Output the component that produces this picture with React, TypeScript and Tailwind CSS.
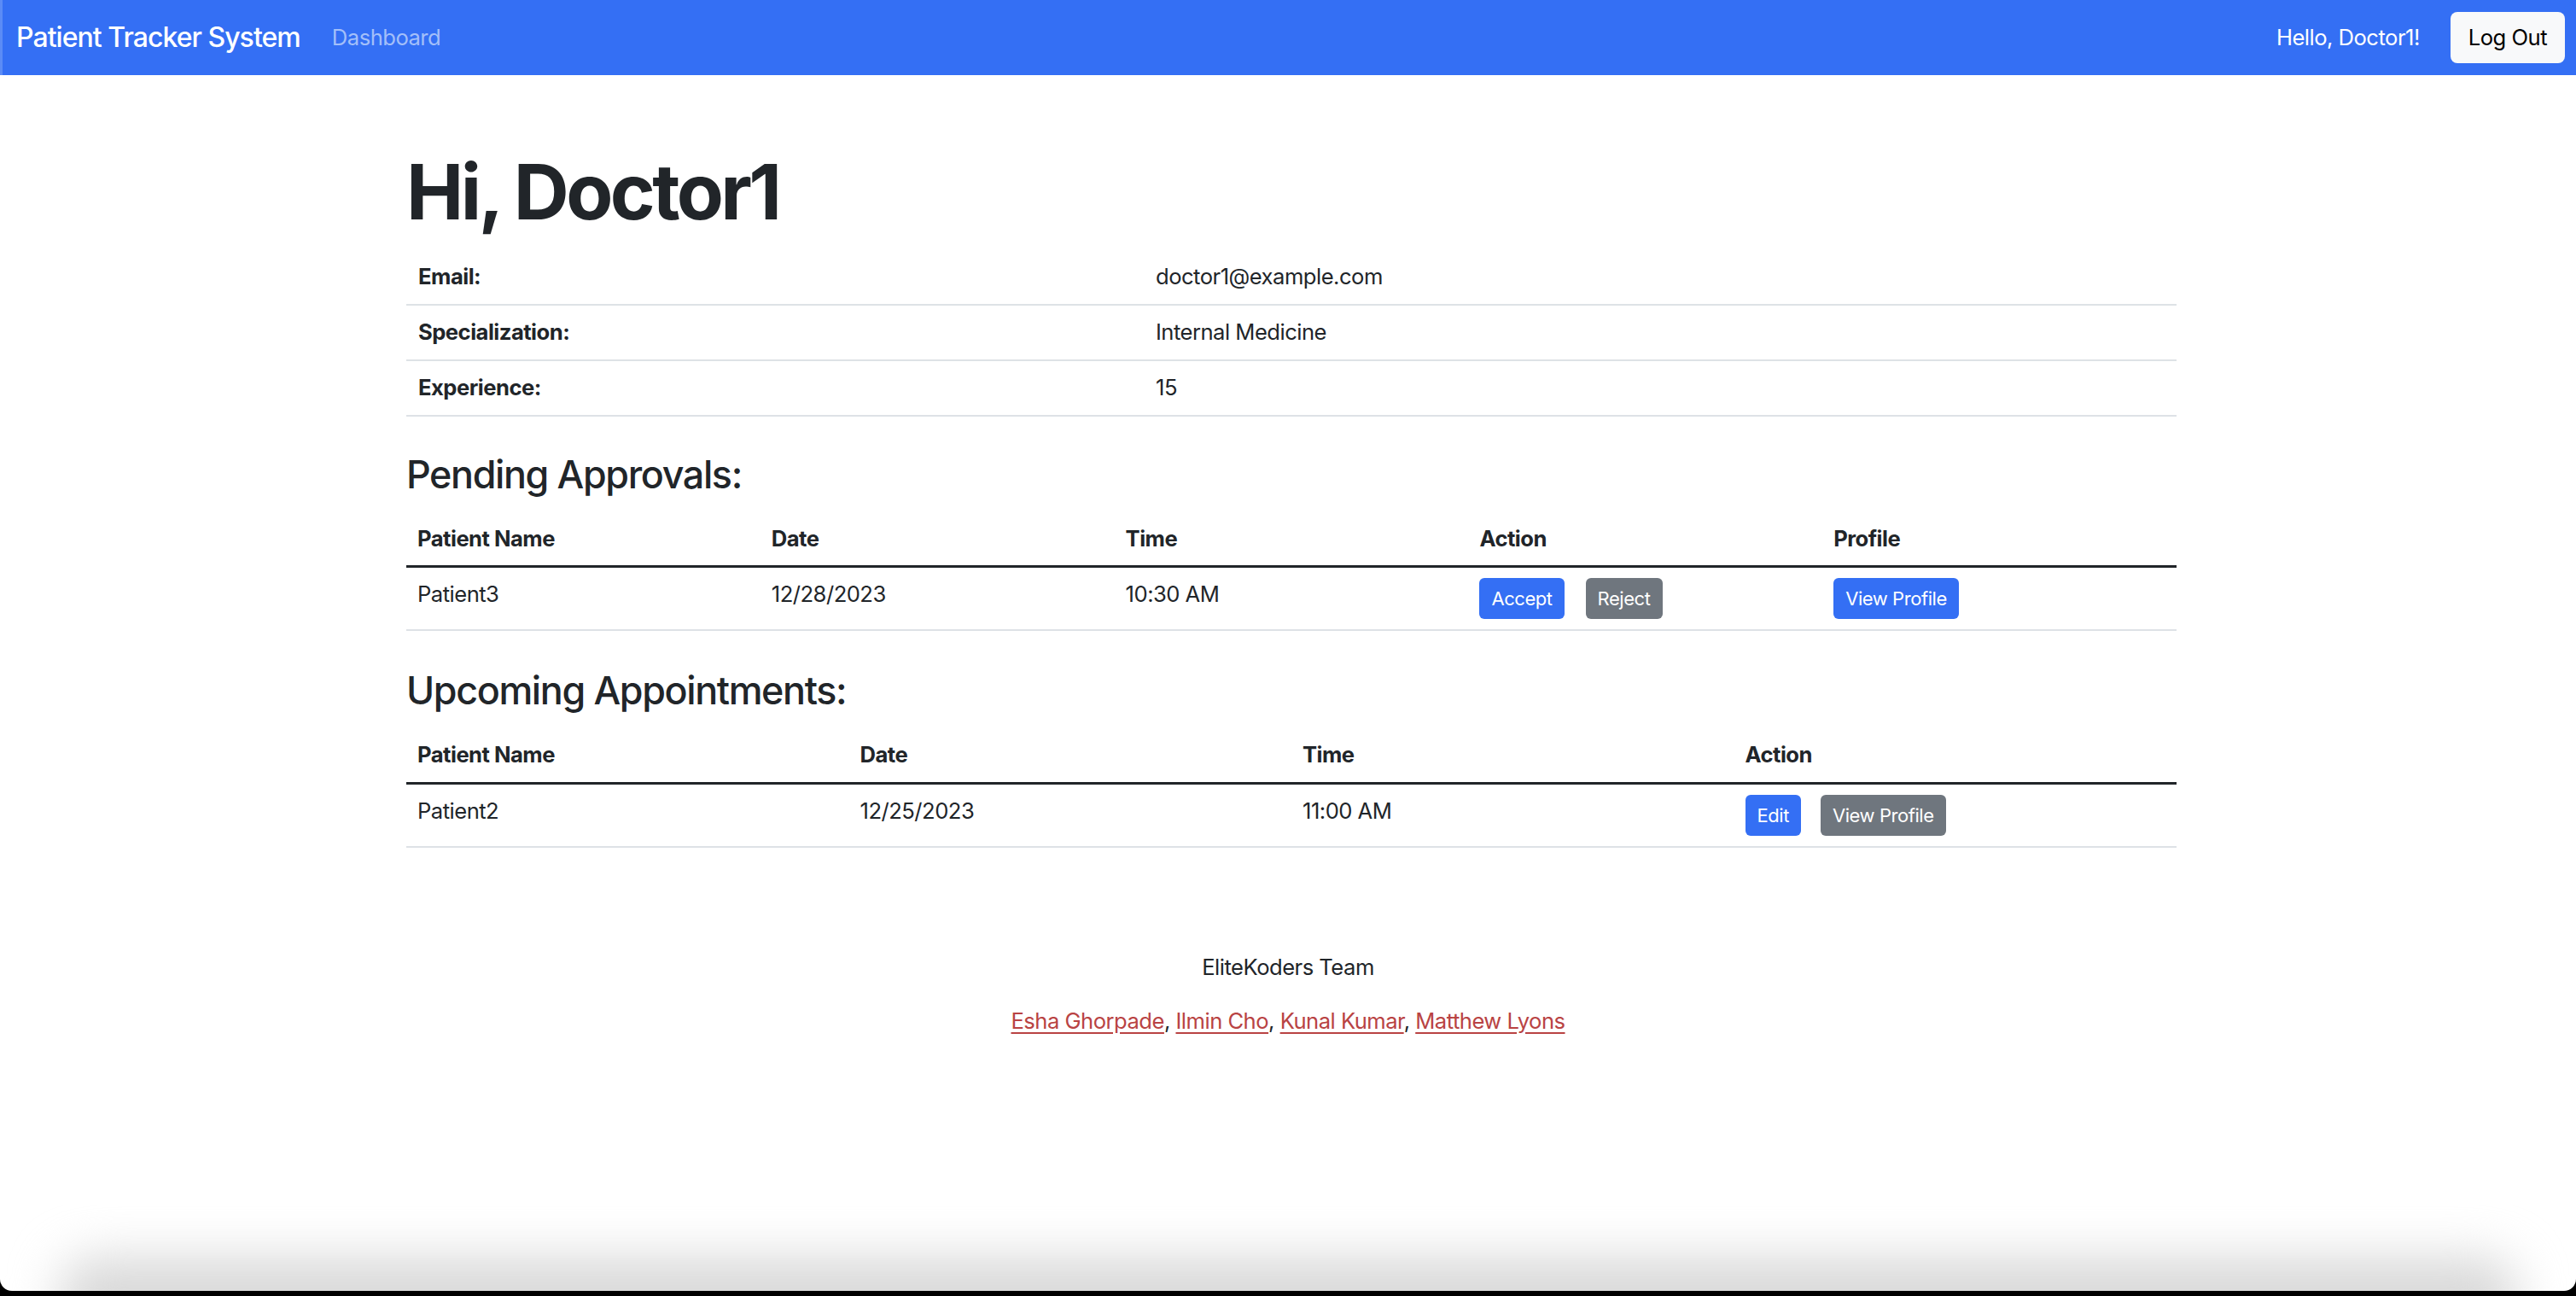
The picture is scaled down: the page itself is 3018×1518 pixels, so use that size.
import React from "react";

const FONT = "font-['Inter','Liberation_Sans',sans-serif]";

function Btn({ children, variant }: { children: React.ReactNode; variant: "blue" | "gray" }) {
  return (
    <button
      className={
        "h-[48px] px-[14px] rounded-[6px] text-[22px] leading-none text-white tracking-[-0.02em] " +
        (variant === "blue" ? "bg-[#346ff4]" : "bg-[#6f767e]")
      }
    >
      {children}
    </button>
  );
}

export default function App() {
  const th = "text-left font-bold px-[13px] h-[64px] align-middle";
  const td = "text-left px-[13px] pt-[12px] pb-[12px] align-top leading-[38px]";
  return (
    <div className={"h-[1518px] w-full bg-black flex flex-col text-[#212529] " + FONT}>
      <div className="flex-1 bg-white rounded-b-[14px] flex flex-col overflow-hidden">
        <nav className="h-[88px] shrink-0 bg-[#346ff4] border-l-[3px] border-[#5b8bf6] flex items-center pl-[16px] pr-[13px]">
          <span className="text-white text-[32px] font-medium tracking-[-0.03em]">Patient Tracker System</span>
          <span className="ml-[37px] text-[#a3bff9] text-[25.6px] tracking-[-0.02em]">Dashboard</span>
          <div className="flex-1" />
          <span className="text-white text-[25.6px] tracking-[-0.02em]">Hello, Doctor1!</span>
          <button className="ml-[36px] h-[60px] px-[21px] rounded-[8px] bg-[#f8f9fa] text-black text-[25.6px] tracking-[-0.02em]">
            Log Out
          </button>
        </nav>

        <main className="w-[2074px] ml-[476px] text-[25.6px] tracking-[-0.02em]">
          <h1 className="mt-[83px] text-[90px] leading-[1.2] font-bold tracking-[-0.04em]">Hi, Doctor1</h1>
          <table className="mt-[13px] w-full border-collapse">
            <tbody>
              {[
                ["Email:", "doctor1@example.com"],
                ["Specialization:", "Internal Medicine"],
                ["Experience:", "15"],
              ].map(([k, v]) => (
                <tr key={k} className="border-b-2 border-[#dee2e6] h-[65px]">
                  <td className="px-[14px] font-bold w-[864px] align-middle">{k}</td>
                  <td className="px-[14px] align-middle">{v}</td>
                </tr>
              ))}
            </tbody>
          </table>

          <h3 className="mt-[42px] text-[44.8px] leading-[1.2] font-medium tracking-[-0.03em]">Pending Approvals:</h3>
          <table className="mt-[16px] w-full border-collapse table-fixed">
            <thead>
              <tr className="border-b-[3px] border-[#212529]">
                <th className={th}>Patient Name</th>
                <th className={th}>Date</th>
                <th className={th}>Time</th>
                <th className={th}>Action</th>
                <th className={th}>Profile</th>
              </tr>
            </thead>
            <tbody>
              <tr className="border-b-2 border-[#dee2e6]">
                <td className={td}>Patient3</td>
                <td className={td}>12/28/2023</td>
                <td className={td}>10:30 AM</td>
                <td className={td}>
                  <div className="flex gap-[25px]">
                    <Btn variant="blue">Accept</Btn>
                    <Btn variant="gray">Reject</Btn>
                  </div>
                </td>
                <td className={td}>
                  <div className="flex">
                    <Btn variant="blue">View Profile</Btn>
                  </div>
                </td>
              </tr>
            </tbody>
          </table>

          <h3 className="mt-[44px] text-[44.8px] leading-[1.2] font-medium tracking-[-0.03em]">Upcoming Appointments:</h3>
          <table className="mt-[16px] w-full border-collapse table-fixed">
            <thead>
              <tr className="border-b-[3px] border-[#212529]">
                <th className={th}>Patient Name</th>
                <th className={th}>Date</th>
                <th className={th}>Time</th>
                <th className={th}>Action</th>
              </tr>
            </thead>
            <tbody>
              <tr className="border-b-2 border-[#dee2e6]">
                <td className={td}>Patient2</td>
                <td className={td}>12/25/2023</td>
                <td className={td}>11:00 AM</td>
                <td className={td}>
                  <div className="flex gap-[23px]">
                    <Btn variant="blue">Edit</Btn>
                    <Btn variant="gray">View Profile</Btn>
                  </div>
                </td>
              </tr>
            </tbody>
          </table>
        </main>

        <footer className="mt-[121px] text-center text-[25.6px] leading-[38px] tracking-[-0.02em]">
          <p className="mb-[25px]">EliteKoders Team</p>
          <p>
            <a className="text-[#b94343] underline underline-offset-[4px]" href="#">Esha Ghorpade</a>,{" "}
            <a className="text-[#b94343] underline underline-offset-[4px]" href="#">Ilmin Cho</a>,{" "}
            <a className="text-[#b94343] underline underline-offset-[4px]" href="#">Kunal Kumar</a>,{" "}
            <a className="text-[#b94343] underline underline-offset-[4px]" href="#">Matthew Lyons</a>
          </p>
        </footer>

        <div className="flex-1" />
        <div className="relative h-[100px] shrink-0 overflow-hidden">
          <div className="absolute left-[70px] right-[70px] top-[60px] h-[120px] bg-[#d9d9d9] blur-[28px] rounded-[40px]" />
        </div>
      </div>
      <div className="h-[6px] shrink-0" />
    </div>
  );
}
